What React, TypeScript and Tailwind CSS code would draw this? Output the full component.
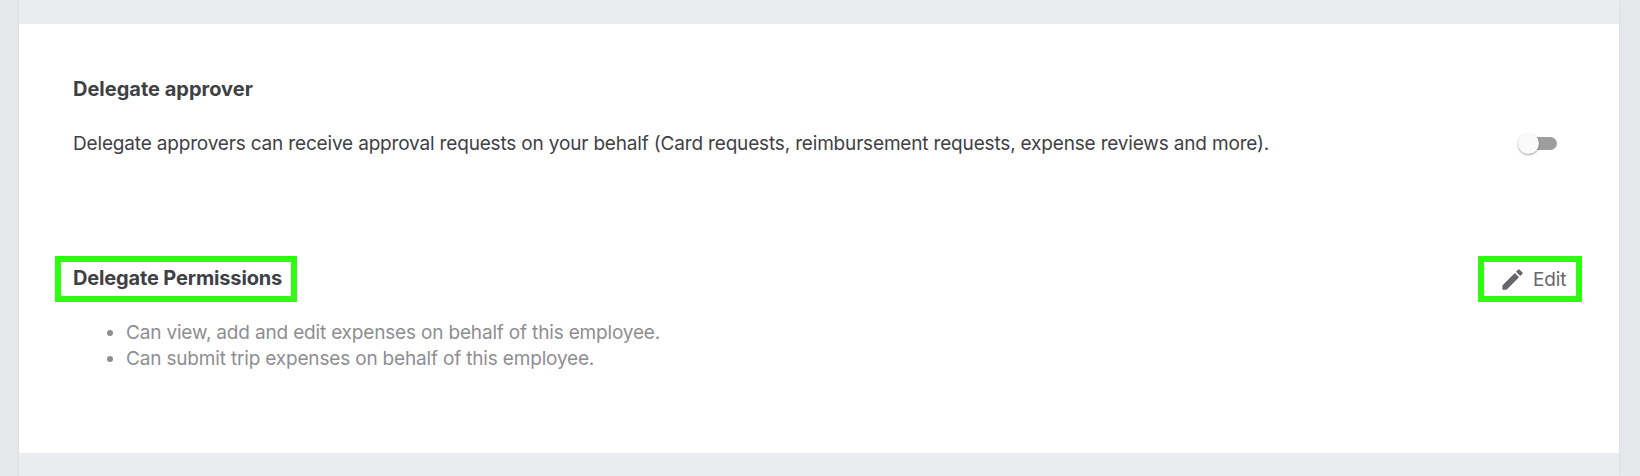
export default function App() {
  return (
    <div className="flex h-[476px] w-full overflow-hidden bg-[#e7e8ec] pl-[19px] font-['Inter',sans-serif] text-[#3f3f46]">
      <main className="flex w-[1600px] shrink-0 flex-col bg-[#ebecf0] py-6 pb-[23px] shadow-[0_2px_10px_rgba(0,0,0,0.02),0_0_2px_rgba(0,0,0,0.08)]">
        <section className="flex-1 bg-white pr-[37px] pl-[36px] pt-[53px]">
          <h2 className="pl-[18px] text-[20px] leading-6 font-bold whitespace-nowrap">
            <span>Delegate approver</span>
          </h2>
          <div className="mt-[30px] flex h-6 items-center justify-between pr-[25px] pl-[18px]">
            <p className="pt-[2px] text-[19px] leading-6 tracking-[-0.17px] whitespace-nowrap">
              Delegate approvers can receive approval requests on your behalf (Card requests, reimbursement requests, expense reviews and more).
            </p>
            <button role="switch" aria-checked="false" aria-label="Delegate approver" className="flex h-[13px] w-[37px] items-center rounded-full bg-[#9e9e9e]">
              <span className="-ml-[2px] size-[21px] shrink-0 rounded-full bg-[#fafafa] shadow-[0_1px_2px_rgba(0,0,0,0.38)]" />
            </button>
          </div>
          <div className="mt-[101px] flex h-[46px] items-center justify-between">
            <h2 className="flex h-[46px] w-[242px] items-center border-[6px] border-[#2dff0f] pb-[2px] pl-[12px] text-[20px] leading-6 font-bold tracking-[-0.15px] whitespace-nowrap">
              Delegate Permissions
            </h2>
            <button className="flex h-[46px] w-[104px] items-center border-[6px] border-[#2dff0f] pl-[15px] text-[19px] leading-6 text-[#66666c]">
              <svg className="size-[27px] shrink-0" viewBox="0 0 24 24" fill="currentColor">
                <path d="M3 17.25V21h3.75L17.81 9.94l-3.75-3.75L3 17.25zM20.71 7.04a1 1 0 0 0 0-1.41l-2.34-2.34a1 1 0 0 0-1.41 0l-1.83 1.83 3.75 3.75 1.83-1.83z" />
              </svg>
              <span className="ml-[7px] pt-[2px] tracking-[-0.15px]">Edit</span>
            </button>
          </div>
          <ul className="mt-[18px] list-disc pl-[71px] text-[19px] leading-[26px] tracking-[-0.173px] text-[#8e8e92]">
            <li>Can view, add and edit expenses on behalf of this employee.</li>
            <li>Can submit trip expenses on behalf of this employee.</li>
          </ul>
        </section>
      </main>
    </div>
  );
}
